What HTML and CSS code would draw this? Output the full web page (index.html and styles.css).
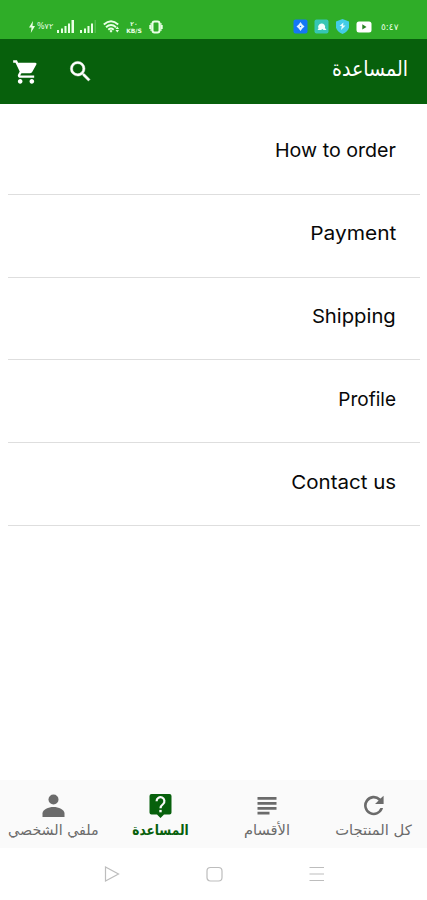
FILE: index.html
```html
<!DOCTYPE html>
<html lang="ar">
<head>
<meta charset="utf-8">
<meta name="viewport" content="width=device-width, initial-scale=1">
<title>المساعدة</title>
<link rel="stylesheet" href="styles.css">
</head>
<body>
<div class="screen">
  <div class="status">
    <svg class="status-bolt" viewBox="0 0 8 12"><path d="M5 0L1 6.500h2.500L2.800 12 7 5H4.500z"/></svg>
    <span class="battery" dir="ltr">%٧٢</span>
    <svg class="signal" viewBox="0 0 17 13"><path d="M0 10h2v3H0zM4 8.500h2V13H4zM7.500 6h2v7h-2zM11 3.500h2V13h-2zM14.500 0H17v13h-2.500z"/></svg>
    <svg class="signal-weak" viewBox="0 0 17 13"><path d="M0 10h2v3H0zM4 8.500h2V13H4zM7.500 6h2v7h-2zM11 3.500h2V13h-2z"/><path opacity=".2" d="M14.500 0h1.500v13h-1.500z"/></svg>
    <svg class="wifi" viewBox="0 0 17 13"><g fill="none" stroke="#e9ffe5" stroke-width="1.900"><path d="M.8 4.500Q8 -2 15.200 4.500M3 7.200Q8 2.800 13 7.200M5.300 9.700Q8 7.400 10.700 9.700"/></g><path d="M6.500 11L8 9.800 9.500 11 8 12.700zM12.500 9l1.800-2.500L16 9zM12.500 10l1.800 2.500L16 10z"/></svg>
    <span class="speed"><span>٢٠</span><span>KB/S</span></span>
    <svg class="vibrate" viewBox="0 0 14 14"><rect x="3.500" y="1.500" width="7" height="11" rx="2" fill="none" stroke="#e9ffe5" stroke-width="2"/><path d="M.3 5h1.200v4H.3zM1.500 3h1.200v8H1.500zM11.300 3h1.200v8h-1.200zM12.500 5h1.200v4h-1.200z"/></svg>
    <span class="spacer"></span>
    <svg class="app" viewBox="0 0 15 15"><rect width="14" height="14" x=".5" y=".5" rx="2" fill="#1477f4"/><path fill="#dff1ff" d="M7.500 3l1.800 2.500 2.200 2-2.200 2-1.800 2.500-1.800-2.500-2.200-2 2.200-2z"/><path fill="#1477f4" d="M6.900 6.900h1.200v1.200H6.900z"/></svg>
    <svg class="app" viewBox="0 0 15 15"><rect width="14" height="14" x=".5" y=".5" rx="2" fill="#36c6b4"/><path fill="#f2fffc" d="M3.500 11l1-1.500a3.500 3.500 0 1 1 6.500-.5l1.500 2H9.500L8.500 10l-1.500 1z"/></svg>
    <svg class="app" viewBox="0 0 15 15"><path fill="#43cce7" d="M7.500 0L14 2.500v6Q13 12.500 7.500 15 2 12.500 1 8.500v-6z"/><path fill="#e7fcff" d="M8.500 3.500L4.500 7h2.300L6 11l4.500-4.500H8z"/></svg>
    <svg class="tube" viewBox="0 0 16 12"><rect x=".5" y=".5" width="15" height="11" rx="2.500" fill="#fff"/><path fill="#278322" d="M6.300 3.300v5.200L10.500 6z"/></svg>
    <span class="time" dir="ltr">٥:٤٧</span>
  </div>
  <header class="bar">
    <svg class="icon cart" viewBox="0 0 24 24"><path d="M7 18c-1.100 0-1.990.9-1.990 2S5.900 22 7 22s2-.9 2-2-.9-2-2-2zM1 2v2h2l3.600 7.590-1.350 2.450c-.16.280-.25.610-.25.960 0 1.100.9 2 2 2h12v-2H7.420c-.14 0-.25-.11-.25-.25l.03-.12.900-1.630h7.450c.75 0 1.410-.41 1.750-1.030l3.580-6.490A1 1 0 0 0 20 4H5.210l-.94-2zM17 18c-1.100 0-1.990.9-1.990 2s.89 2 1.990 2 2-.9 2-2-.9-2-2-2z"/></svg>
    <svg class="icon search" viewBox="0 0 24 24"><path stroke="#fff" stroke-width=".4" d="M15.500 14h-.79l-.28-.27A6.470 6.470 0 0 0 16 9.500 6.500 6.500 0 1 0 9.500 16c1.610 0 3.090-.59 4.230-1.570l.27.280v.79l5 4.990L20.490 19zm-6 0a4.500 4.500 0 1 1 0-9 4.500 4.500 0 0 1 0 9z"/></svg>
    <h1 class="title" dir="rtl">المساعدة</h1>
  </header>
  <main class="list">
    <div class="row"><span class="t-order">How to order</span></div>
    <div class="row"><span class="t-payment">Payment</span></div>
    <div class="row"><span class="t-shipping">Shipping</span></div>
    <div class="row"><span class="t-profile">Profile</span></div>
    <div class="row"><span class="t-contact">Contact us</span></div>
  </main>
  <nav class="tabs">
    <div class="tab"><svg viewBox="0 0 25 25"><circle cx="12.500" cy="6.500" r="5"/><path d="M1.500 24v-3.500c0-4 6-6.500 11-6.500s11 2.500 11 6.500V24z"/></svg><span dir="rtl" class="n-profile">ملفي الشخصي</span></div>
    <div class="tab active"><svg viewBox="0 0 25 25"><path d="M3.500 1h18a2 2 0 0 1 2 2v16.500a2 2 0 0 1-2 2H16L12.500 25 9 21.500H3.500a2 2 0 0 1-2-2V3a2 2 0 0 1 2-2z"/><path fill="none" stroke="#fafafa" stroke-width="2.200" d="M8.600 8.200a3.900 3.900 0 1 1 6.500 2.800Q12.500 13 12.500 15.300"/><path fill="#fafafa" d="M11.300 16.900h2.400v2.400h-2.400z"/></svg><span dir="rtl" class="n-help">المساعدة</span></div>
    <div class="tab"><svg viewBox="0 0 25 25"><path d="M3.500 4h19v2.700h-19zM3.500 9h19v2.700h-19zM3.500 14h19v2.700h-19zM3.500 18.800h12v2.700h-12z"/></svg><span dir="rtl" class="n-sections">الأقسام</span></div>
    <div class="tab"><svg viewBox="0 0 24 24"><path d="M18.700 5.300A9.300 9.300 0 1 0 21.200 14.500H18.600A6.800 6.800 0 1 1 16.900 7.100L13.500 10.500H21.700V2.700z"/></svg><span dir="rtl" class="n-products">كل المنتجات</span></div>
  </nav>
  <div class="system">
    <svg viewBox="0 0 18 18"><path d="M2.500 2v14L15.500 9z"/></svg>
    <svg viewBox="0 0 18 18"><rect x="1" y="2.500" width="15" height="13.500" rx="3.500"/></svg>
    <svg viewBox="0 0 18 18"><path d="M1.500 2.500h14.500M1.500 9h14.500M1.500 15.500h14.500"/></svg>
  </div>
</div>
</body>
</html>
```
FILE: styles.css
```css
* { box-sizing: border-box; }
body { margin: 0; background: #fff; font-family: "DejaVu Sans", sans-serif; }
svg { display: block; flex: none; }
.screen { width: 427px; height: 900px; display: flex; flex-direction: column; overflow: hidden; }

.status { height: 39px; flex: none; background: #2fad28; color: #e9ffe5; fill: #e9ffe5; display: flex; align-items: center; padding: 14px 27px 0 28px; }
.status-bolt { width: 8px; height: 12px; }
.battery { width: 18px; margin-left: 1px; font-size: 8px; line-height: 12px; white-space: nowrap; }
.signal { width: 17px; height: 13px; margin-left: 2px; }
.signal-weak { width: 17px; height: 13px; margin-left: 6px; }
.wifi { width: 17px; height: 13px; margin-left: 6px; }
.speed { width: 18px; margin-left: 5px; display: flex; flex-direction: column; align-items: center; font-size: 6px; line-height: 7px; font-weight: bold; }
.vibrate { width: 14px; height: 14px; margin-left: 6px; }
.spacer { flex: 1; }
.app { width: 15px; height: 15px; margin-right: 6px; }
.tube { width: 16px; height: 12px; margin-right: 9px; }
.time { width: 19px; font-size: 9px; line-height: 12px; white-space: nowrap; }

.bar { height: 65px; flex: none; background: #07600c; color: #fff; fill: #fff; display: flex; align-items: center; padding: 0 19px 0 12px; }
.icon { width: 27px; height: 27px; }
.cart { width: 28px; height: 28px; }
.search { margin-left: 27px; }
.title { margin: 0 0 8px auto; font-size: 20px; line-height: 30px; font-weight: 400; white-space: nowrap; transform: scale(.95, 1.08); transform-origin: right; }

.list { flex: 1; padding: 8px 7px 0 8px; }
.row { height: 82.800px; border-bottom: 1px solid #dedede; display: flex; align-items: center; justify-content: flex-end; padding: 0 24px 3px 0; color: #080808; font-family: Inter, sans-serif; font-size: 19px; line-height: 28px; }
.row span { transform-origin: right; }
.t-order { transform: scaleX(1.034); }
.t-payment { transform: scaleX(1.1); }
.t-shipping { transform: scaleX(1.065); }
.t-contact { transform: scaleX(1.08); }

.tabs { height: 68px; flex: none; background: #fafafa; display: grid; grid-template-columns: repeat(4, 1fr); color: #6b6b6b; fill: #6b6b6b; }
.tab { display: flex; flex-direction: column; align-items: center; padding-top: 13px; font-size: 14px; line-height: 20px; white-space: nowrap; }
.tab svg { width: 25px; height: 25px; margin-bottom: 2px; }
.active { color: #07600c; fill: #07600c; font-weight: bold; }
.n-profile { transform: scaleX(1.02); }
.n-help { transform: scaleX(.87); }
.n-sections { transform: scaleX(1.05); }
.n-products { transform: scaleX(1.05); }

.system { height: 52px; flex: none; display: flex; align-items: center; justify-content: space-between; padding: 0 101px 0 103px; }
.system svg { width: 18px; height: 18px; fill: none; stroke: #bdbdbd; stroke-width: 1.200; }
```
